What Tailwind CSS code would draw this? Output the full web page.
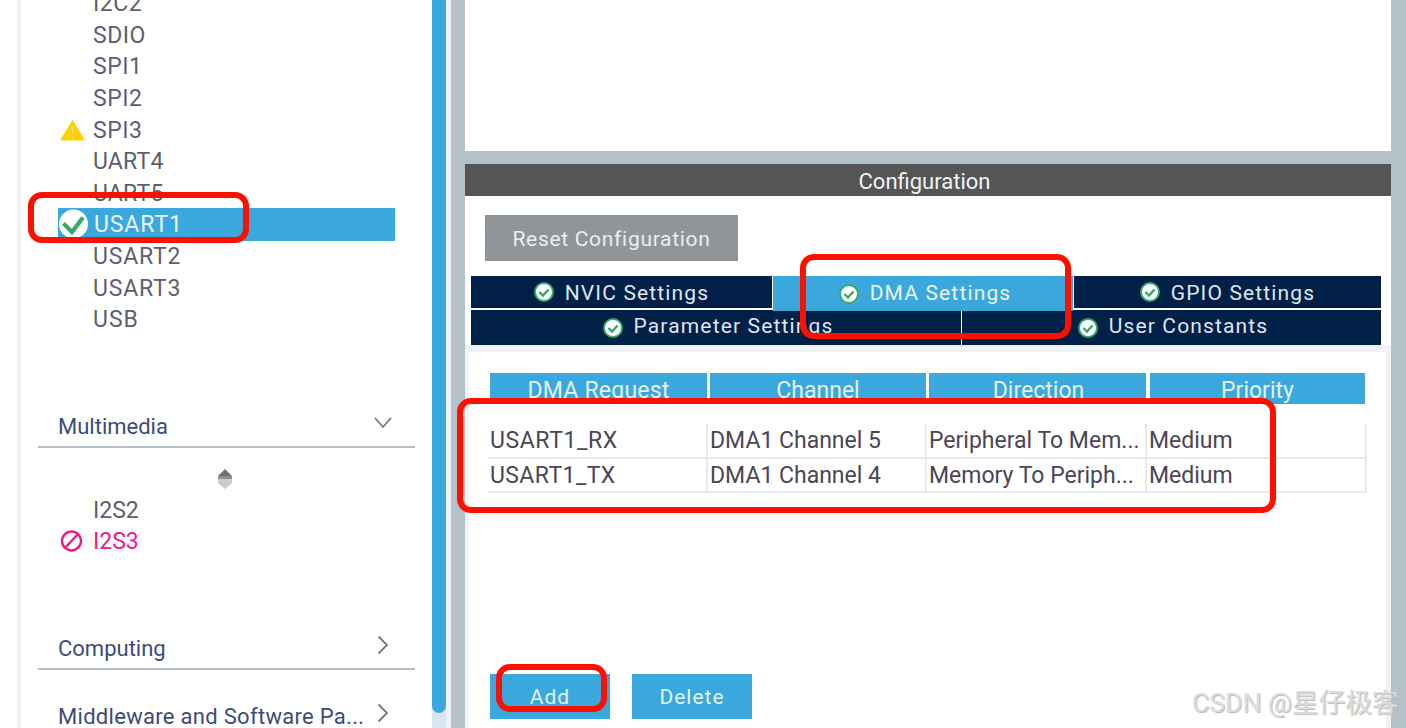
<!DOCTYPE html>
<html><head><meta charset="utf-8"><script src="https://cdn.jsdelivr.net/npm/@tailwindcss/browser@4"></script></head>
<body class="m-0">
<div class="relative flex w-[1406px] h-[728px] overflow-hidden bg-white font-['Roboto','Noto_Sans_CJK_SC',sans-serif] text-[23px] text-[#5c5f6e]">
  <div class="w-[17px] shrink-0 bg-white"></div>
  <div class="w-[4px] shrink-0 bg-[#f0f2f5]"></div>
  <!-- sidebar -->
  <aside class="w-[411px] shrink-0 pt-0 -mt-[12px]">
    <div class="ml-[37px] w-[337px] leading-none tracking-[0.5px]">
      <div class="h-[31.6px] flex items-center pl-[35px]">I2C2</div>
      <div class="h-[31.6px] flex items-center pl-[35px]">SDIO</div>
      <div class="h-[31.6px] flex items-center pl-[35px]">SPI1</div>
      <div class="h-[31.6px] flex items-center pl-[35px]">SPI2</div>
      <div class="h-[31.6px] flex items-center">
        <svg class="w-[35px] h-[22px] shrink-0" viewBox="0 0 35 22"><path d="M14.5 1.5 L26 20.5 Q26.3 21 25.5 21 L3.5 21 Q2.7 21 3 20.5 Z" fill="#fdd000" stroke="#fdd000" stroke-width="1" stroke-linejoin="round"/><path d="M14.5 8v7M14.5 17v1.5" stroke="#fde680" stroke-width="1.2"/></svg>
        <span>SPI3</span>
      </div>
      <div class="h-[31.6px] flex items-center pl-[35px] tracking-[0.2px]">UART4</div>
      <div class="h-[31.6px] flex items-center pl-[35px] tracking-[0.2px]">UART5</div>
      <div class="h-[32.6px] -mt-[1px] flex items-center bg-[#3aa8dc] text-[#eaf6fc] tracking-[0.9px]">
        <svg class="w-[36px] h-[30px] shrink-0" viewBox="0 0 36 30"><circle cx="15.5" cy="15" r="14.5" fill="#fff"/><path d="M5.5 14.5 L14 23 L25 8.5" fill="none" stroke="#3aa86a" stroke-width="4.2"/></svg>
        <span>USART1</span>
      </div>
      <div class="h-[31.6px] flex items-center pl-[35px] tracking-[0.8px]">USART2</div>
      <div class="h-[31.6px] flex items-center pl-[35px] tracking-[0.8px]">USART3</div>
      <div class="h-[31.6px] flex items-center pl-[35px] tracking-[1px]">USB</div>
    </div>
    <div class="mt-[70px] ml-[17px] w-[377px] h-[42px] border-b-2 border-[#b5c1c8] flex items-start justify-between pl-[20px] pr-[22px] text-[22px] text-[#3d4a7c]">
      <span class="mt-[4px]">Multimedia</span>
      <svg class="w-[20px] h-[14px] mt-[10px]" viewBox="0 0 20 14"><path d="M2 2 L10 11 L18 2" fill="none" stroke="#737880" stroke-width="1.8"/></svg>
    </div>
    <div class="flex justify-center mt-[21px] pr-[43px] h-[20px] ml-[17px] w-[416px]">
      <svg class="w-[16px] h-[20px]" viewBox="0 0 16 20"><path d="M8 0 L15 7 L1 7 Z" fill="#6d7074"/><rect x="1" y="7" width="14" height="3" fill="#8f9295"/><rect x="1" y="10" width="14" height="4" fill="#c9cbce"/><path d="M1 14 L15 14 L8 20 Z" fill="#c9cbce"/></svg>
    </div>
    <div class="ml-[37px] w-[337px] mt-[6px] leading-none">
      <div class="h-[31px] flex items-center pl-[35px]">I2S2</div>
      <div class="h-[31px] flex items-center text-[#ec1a8c]">
        <svg class="w-[35px] h-[22px] shrink-0" viewBox="0 0 35 22"><circle cx="13.5" cy="11" r="9.5" fill="none" stroke="#ec1a8c" stroke-width="2.4"/><path d="M7 18 L20 4" stroke="#ec1a8c" stroke-width="2.4"/></svg>
        <span>I2S3</span>
      </div>
    </div>
    <div class="mt-[67px] ml-[17px] w-[377px] h-[46px] border-b-2 border-[#b5c1c8] flex items-start justify-between pl-[20px] pr-[26px] text-[22px] text-[#3d4a7c]">
      <span class="mt-[8px]">Computing</span>
      <svg class="w-[12px] h-[20px] mt-[11px]" viewBox="0 0 12 20"><path d="M1.5 1.5 L10 10 L1.5 18.5" fill="none" stroke="#737880" stroke-width="1.8"/></svg>
    </div>
    <div class="ml-[17px] w-[377px] flex items-start justify-between pl-[20px] pr-[26px] text-[22px] text-[#3d4a7c] mt-[28px] whitespace-nowrap">
      <span class="mt-[2px] tracking-[0.3px]">Middleware and Software Pa...</span>
      <svg class="w-[12px] h-[20px] mt-[5px]" viewBox="0 0 12 20"><path d="M1.5 1.5 L10 10 L1.5 18.5" fill="none" stroke="#737880" stroke-width="1.8"/></svg>
    </div>
  </aside>
  <!-- scrollbar -->
  <div class="w-[14px] shrink-0 flex flex-col bg-[#d6e6f4]"><div class="h-[713px] bg-[#3aa8dc] rounded-b-[7px]"></div></div>
  <div class="w-[5px] shrink-0 bg-[#f0f2f5]"></div>
  <div class="w-[14px] shrink-0 bg-[#b5c1c8]"></div>
  <!-- main -->
  <main class="w-[926px] shrink-0 flex flex-col">
    <div class="h-[151px] bg-white"></div>
    <div class="h-[13px] bg-[#b5c1c8]"></div>
    <div class="h-[32px] bg-[#545554] text-[#f0f4f6] text-[22px] flex items-center justify-center pr-[7px] pt-[2px]">Configuration</div>
    <div class="h-[80px] pt-[19px] pl-[20px]">
      <div class="w-[253px] h-[46px] bg-[#90959a] text-[#eceef0] text-[21px] tracking-[0.7px] flex items-center justify-center pt-[3px]">Reset Configuration</div>
    </div>
    <div class="pl-[6px] text-[#dfe6ee] text-[21px] tracking-[1.15px]">
      <div class="flex gap-px h-[34px]">
        <div class="w-[301px] h-[32px] bg-[#012048] flex items-center justify-center gap-[11px]">
          <svg class="w-[20px] h-[20px]" viewBox="0 0 20 20"><circle cx="10" cy="10" r="9" fill="#fff" stroke="#35a868" stroke-width="2"/><path d="M5.5 10 L9 13.5 L14.5 7.5" fill="none" stroke="#35a868" stroke-width="2.4"/></svg>
          <span class="pt-[3px]">NVIC Settings</span>
        </div>
        <div class="relative z-10 w-[300px] h-[35px] bg-[#3aa8dc] text-[#e8f5fb] flex items-center justify-center gap-[11px] pl-[4px]">
          <svg class="w-[20px] h-[20px]" viewBox="0 0 20 20"><circle cx="10" cy="10" r="9" fill="#fff" stroke="#35a868" stroke-width="2"/><path d="M5.5 10 L9 13.5 L14.5 7.5" fill="none" stroke="#35a868" stroke-width="2.4"/></svg>
          <span>DMA Settings</span>
        </div>
        <div class="w-[307px] h-[32px] bg-[#012048] flex items-center justify-center gap-[11px]">
          <svg class="w-[20px] h-[20px]" viewBox="0 0 20 20"><circle cx="10" cy="10" r="9" fill="#fff" stroke="#35a868" stroke-width="2"/><path d="M5.5 10 L9 13.5 L14.5 7.5" fill="none" stroke="#35a868" stroke-width="2.4"/></svg>
          <span class="pt-[3px]">GPIO Settings</span>
        </div>
      </div>
      <div class="flex gap-px h-[35px]">
        <div class="w-[490px] bg-[#012048] flex items-center justify-center gap-[11px] pl-[4px]">
          <svg class="w-[20px] h-[20px]" viewBox="0 0 20 20"><circle cx="10" cy="10" r="9" fill="#fff" stroke="#35a868" stroke-width="2"/><path d="M5.5 10 L9 13.5 L14.5 7.5" fill="none" stroke="#35a868" stroke-width="2.4"/></svg>
          <span class="pb-[2px]">Parameter Settings</span>
        </div>
        <div class="w-[419px] bg-[#012048] flex items-center justify-center gap-[11px] pl-[3px]">
          <svg class="w-[20px] h-[20px]" viewBox="0 0 20 20"><circle cx="10" cy="10" r="9" fill="#fff" stroke="#35a868" stroke-width="2"/><path d="M5.5 10 L9 13.5 L14.5 7.5" fill="none" stroke="#35a868" stroke-width="2.4"/></svg>
          <span class="pb-[2px]">User Constants</span>
        </div>
      </div>
    </div>
    <div class="flex-1 bg-[#f0f2f5] pt-[7px] pl-[4px] pr-[5px]">
      <div class="h-full bg-white pt-[21px] pl-[21px]">
        <div class="flex h-[31px] text-[#e3f2fa] text-[23px] leading-none">
          <div class="w-[217px] bg-[#3aa8dc] flex items-center justify-center pt-[3px] tracking-[0.2px]">DMA Request</div>
          <div class="ml-[3px] w-[216px] bg-[#3aa8dc] flex items-center justify-center pt-[3px]">Channel</div>
          <div class="ml-[3px] w-[217px] bg-[#3aa8dc] flex items-center justify-center pt-[3px] pl-[2px]">Direction</div>
          <div class="ml-[4px] w-[215px] bg-[#3aa8dc] flex items-center justify-center pt-[3px]">Priority</div>
        </div>
        <div class="mt-[20px] -ml-[2px] w-[879px] text-[#4a4654] text-[23px] leading-none">
          <div class="grid grid-cols-[220px_219px_220px_220px] h-[35px] border-b-2 border-[#e6e9ee]">
            <div class="border-r-2 border-[#e6e9ee] pl-[2px] flex items-center whitespace-nowrap tracking-[0.6px]">USART1_RX</div>
            <div class="border-r-2 border-[#e6e9ee] pl-[2px] flex items-center whitespace-nowrap">DMA1 Channel 5</div>
            <div class="border-r-2 border-[#e6e9ee] pl-[2px] flex items-center whitespace-nowrap">Peripheral To Mem...</div>
            <div class="border-r-2 border-[#e6e9ee] pl-[2px] flex items-center whitespace-nowrap">Medium</div>
          </div>
          <div class="grid grid-cols-[220px_219px_220px_220px] h-[34px] border-b-2 border-[#e6e9ee]">
            <div class="border-r-2 border-[#e6e9ee] pl-[2px] flex items-center whitespace-nowrap tracking-[0.4px]">USART1_TX</div>
            <div class="border-r-2 border-[#e6e9ee] pl-[2px] flex items-center whitespace-nowrap">DMA1 Channel 4</div>
            <div class="border-r-2 border-[#e6e9ee] pl-[2px] flex items-center whitespace-nowrap">Memory To Periph...</div>
            <div class="border-r-2 border-[#e6e9ee] pl-[2px] flex items-center whitespace-nowrap">Medium</div>
          </div>
        </div>
        <div class="mt-[181px] flex gap-[22px] text-[#e3f2fa] text-[21px] tracking-[1px]">
          <div class="w-[120px] h-[45px] bg-[#3aa8dc] flex items-center justify-center pt-[2px]">Add</div>
          <div class="w-[120px] h-[45px] bg-[#3aa8dc] flex items-center justify-center pt-[2px]">Delete</div>
        </div>
      </div>
    </div>
  </main>
  <div class="w-[15px] shrink-0 bg-[#b5c1c8]"></div>

  <!-- hand-drawn red annotations -->
  <div class="absolute left-[28px] top-[192px] w-[221px] h-[51px] border-[6px] border-[#fe1000] rounded-[14px]"></div>
  <div class="absolute left-[800px] top-[254px] w-[271px] h-[85px] border-[6px] border-[#fe1000] rounded-[14px] z-20"></div>
  <div class="absolute left-[457px] top-[398px] w-[819px] h-[115px] border-[6px] border-[#fe1000] rounded-[14px] z-20"></div>
  <div class="absolute left-[496px] top-[664px] w-[111px] h-[48px] border-[6px] border-[#fe1000] rounded-[14px] z-20"></div>
  <!-- watermark -->
  <div class="absolute left-[1192px] top-[686px] text-[26.6px] leading-[34px] text-[#dcdcdc] whitespace-nowrap z-30 [text-shadow:1px_1px_1px_#b8b8b8]">CSDN @星仔极客</div>
</div>
</body></html>
